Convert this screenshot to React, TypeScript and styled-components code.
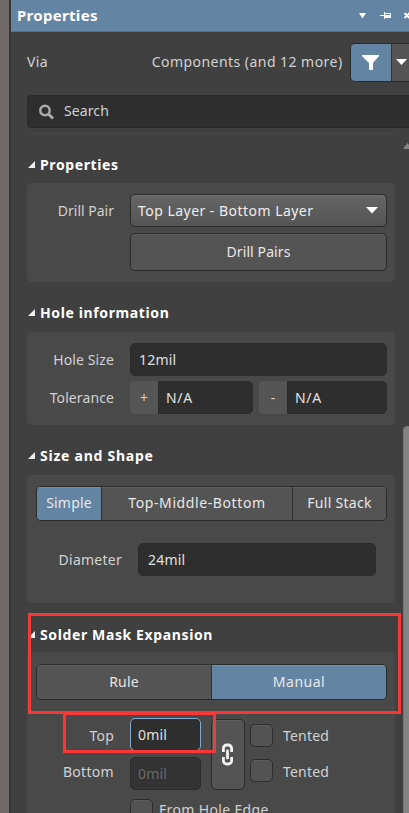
import React from 'react';
import styled, { createGlobalStyle, css } from 'styled-components';

const GlobalStyle = createGlobalStyle`
  * { box-sizing: border-box; }
  html, body { margin: 0; height: 813px; overflow: hidden; }
  body { background: #404040; font: 14px/20px "Noto Sans", "Open Sans", sans-serif; color: #d2d2d2; }
`;

const Window = styled.div`
  position: relative;
  width: 409px;
  height: 813px;
  overflow: hidden;
  background: #404040;
  border-left: 9px solid #6f6a67;
`;
const Panel = styled.main`
  width: 400px;
  height: 813px;
  border-left: 2px solid #373737;
`;
const TitleBar = styled.header`
  display: flex;
  align-items: center;
  height: 32px;
  padding: 0 0 1px 6px;
  background: #6384a3;
  border-bottom: 1px solid #56728d;
  color: #fff;
`;
const TitleText = styled.h1`
  flex: 1;
  margin: 0;
  font: 700 15px/20px "Noto Sans", sans-serif;
  letter-spacing: 0.3px;
`;
const TitleIcons = styled.svg`
  display: block;
  width: 52px;
  height: 31px;
`;
const FilterRow = styled.div`
  display: flex;
  align-items: center;
  height: 40px;
  margin: 10px 0 0 16px;
  width: 390px;
`;
const Label = styled.span<{ $width?: number; $spacing?: number }>`
  display: block;
  width: ${p => (p.$width ? `${p.$width}px` : 'auto')};
  letter-spacing: ${p => p.$spacing ?? 0}px;
  white-space: pre;
`;
const FieldLabel = styled(Label)`
  text-align: right;
  flex: none;
`;
const FilterButtons = styled.div`
  display: flex;
  height: 39px;
  margin-left: 7px;
  border: 1px solid #2a2a2a;
  border-radius: 5px;
  overflow: hidden;
`;
const FilterButton = styled.button<{ $active?: boolean }>`
  width: ${p => (p.$active ? 41 : 24)}px;
  padding: 0;
  border: 0;
  border-right: 1px solid #333;
  background: ${p => (p.$active ? '#6384a3' : '#555')};
  svg { display: block; }
`;
const SearchBox = styled.div`
  display: flex;
  align-items: center;
  width: 390px;
  height: 33px;
  margin: 13px 0 0 16px;
  padding: 0 0 2px 11px;
  gap: 9px;
  border: 1px solid #282828;
  border-radius: 4px;
  background: #2e2e2e;
  svg { margin-top: 2px; }
`;
const Divider = styled.hr`
  width: 366px;
  height: 1px;
  margin: 5px 0 0 18px;
  border: 0;
  background: #474747;
`;
const Heading = styled.h2<{ $height: number; $bottom: number; $spacing?: number }>`
  display: flex;
  align-items: flex-end;
  gap: 5px;
  height: ${p => p.$height}px;
  margin: 0 0 0 17px;
  padding-bottom: ${p => p.$bottom}px;
  color: #fff;
  font: 700 14px/20px "Noto Sans", sans-serif;
  letter-spacing: ${p => p.$spacing ?? 0.62}px;
  svg { margin-bottom: 7px; flex: none; }
`;
const Group = styled.section<{ $height: number; $top?: number }>`
  width: 368px;
  height: ${p => p.$height}px;
  margin-left: 16px;
  padding: ${p => p.$top ?? 11}px 8px 0 9px;
  border-radius: 5px;
  background: #494949;
`;
const Row = styled.div<{ $gap?: number; $indent?: number }>`
  display: flex;
  align-items: center;
  margin-top: ${p => p.$gap ?? 0}px;
  padding-left: ${p => p.$indent ?? 0}px;
`;
const control = css`
  display: flex;
  align-items: center;
  border: 1px solid #2b2b2b;
  border-radius: 5px;
  white-space: pre;
`;
const Field = styled.div<{ $width: number; $state?: 'focus' | 'disabled'; $joined?: boolean; $spacing?: number; $pad?: number }>`
  ${control}
  width: ${p => p.$width}px;
  height: 33px;
  padding-left: ${p => p.$pad ?? 8}px;
  background: ${p => (p.$state === 'disabled' ? '#333' : '#2e2e2e')};
  color: ${p => (p.$state === 'disabled' ? '#696969' : '#e0e0e0')};
  letter-spacing: ${p => p.$spacing ?? 0.2}px;
  ${p => p.$state === 'focus' && css`border-color: #83a9cc;`}
  ${p => p.$joined && css`border-radius: 0 5px 5px 0;`}
`;
const Sign = styled.span<{ $offset?: number }>`
  width: 28px;
  height: 33px;
  margin-left: ${p => p.$offset ?? 0}px;
  border-radius: 4px 0 0 4px;
  background: #555;
  text-align: center;
  line-height: 34px;
`;
const Select = styled.div`
  ${control}
  width: 257px;
  height: 33px;
  padding: 0 8px 0 7px;
  justify-content: space-between;
  background: linear-gradient(#666, #545454);
  box-shadow: inset 0 1px #707070;
  color: #eee;
`;
const Button = styled.button<{ $width: number; $height: number }>`
  ${control}
  flex: none;
  justify-content: center;
  width: ${p => p.$width}px;
  height: ${p => p.$height}px;
  padding: 0;
  background: #545454;
  box-shadow: inset 0 1px #5f5f5f;
  color: #e8e8e8;
  font: inherit;
`;
const Segments = styled.div<{ $height: number }>`
  display: flex;
  width: 351px;
  height: ${p => p.$height}px;
  border: 1px solid #2b2b2b;
  border-radius: 5px;
  overflow: hidden;
`;
const Segment = styled.button<{ $width: number; $active?: boolean; $spacing?: number }>`
  width: ${p => p.$width}px;
  flex: none;
  padding: 0 0 1px;
  border: 0;
  border-right: 1px solid #333;
  background: ${p => (p.$active ? '#6384a3' : '#545454')};
  box-shadow: inset 0 1px ${p => (p.$active ? '#6f90af' : '#5f5f5f')};
  color: #e8e8e8;
  font: inherit;
  letter-spacing: ${p => p.$spacing ?? 0}px;
  &:last-child { border-right: 0; }
`;
const MaskGrid = styled.div`
  display: grid;
  grid-template-columns: 71px 34px 23px auto;
  margin-left: 16px;
  height: 72px;
`;
const MaskFields = styled.div`
  display: flex;
  margin-top: 18px;
`;
const Stack = styled.div<{ $gap: number; $left?: number; $top?: number }>`
  display: flex;
  flex-direction: column;
  gap: ${p => p.$gap}px;
  margin: ${p => p.$top ?? 0}px 0 0 ${p => p.$left ?? 0}px;
`;
const Check = styled.span`
  display: block;
  width: 23px;
  height: 23px;
  border: 1px solid #2d2d2d;
  border-radius: 5px;
  background: #535353;
  box-shadow: inset 0 1px #5c5c5c;
`;
const EdgeLabel = styled(Label)`
  margin: -1px 0 1px 6px;
`;
const ScrollUp = styled.svg`
  position: absolute;
  left: 394px;
  top: 142px;
`;
const ScrollThumb = styled.div`
  position: absolute;
  left: 394px;
  top: 426px;
  width: 10px;
  height: 400px;
  border: 1px solid #747474;
  border-radius: 4px 0 0 0;
  background: #838383;
`;
const Highlight = styled.div<{ $x: number; $y: number; $w: number; $h: number }>`
  position: absolute;
  left: ${p => p.$x}px;
  top: ${p => p.$y}px;
  width: ${p => p.$w}px;
  height: ${p => p.$h}px;
  border: 3px solid #fa3737;
  pointer-events: none;
`;

const Expander = () => (
  <svg width="7" height="7" viewBox="0 0 7 7"><path d="M7 0v7H0z" fill="#eee" /></svg>
);

export default function App() {
  return (
    <Window>
      <GlobalStyle />
      <Panel>
        <TitleBar>
          <TitleText>Properties</TitleText>
          <TitleIcons viewBox="0 0 52 31" fill="#fff">
            <path d="M2 13h7l-3.500 5.500z" />
            <path d="M23 15h4v-3h1v1h6v5h-6v1h-1v-3h-4zM28 14v1h5v-1z" fillRule="evenodd" />
            <path d="M47.500 13l5 5m0-5l-5 5" stroke="#fff" strokeWidth="1.800" />
          </TitleIcons>
        </TitleBar>
        <FilterRow>
          <Label $width={125} $spacing={0.4}>Via</Label>
          <Label $width={192} $spacing={0.46}>Components (and 12 more)</Label>
          <FilterButtons>
            <FilterButton $active>
              <svg width="40" height="37" viewBox="0 0 40 37"><path d="M11 11h17v1l-6 7v7h-4v-7l-7-7z" fill="#fff" /></svg>
            </FilterButton>
            <FilterButton>
              <svg width="24" height="37" viewBox="0 0 24 37"><path d="M4 15h11l-5.500 6z" fill="#fff" /></svg>
            </FilterButton>
          </FilterButtons>
        </FilterRow>
        <SearchBox>
          <svg width="16" height="16" viewBox="0 0 16 16" fill="none" stroke="#aaa">
            <circle cx="6" cy="6.500" r="4.700" strokeWidth="2.500" />
            <path d="M9.500 10l4.500 4.500" strokeWidth="3" />
          </svg>
          <Label $spacing={0.1}>Search</Label>
        </SearchBox>
        <Divider />

        <Heading $height={49} $bottom={8}><Expander />Properties</Heading>
        <Group $height={99}>
          <Row>
            <FieldLabel $width={78}>Drill Pair</FieldLabel>
            <Stack $left={16} $gap={5}>
              <Select>
                <Label $spacing={0.47}>Top Layer - Bottom Layer</Label>
                <svg width="12" height="7" viewBox="0 0 12 7"><path d="M0 0h12L6 6.500z" fill="#fff" /></svg>
              </Select>
            </Stack>
          </Row>
          <Row $gap={6} $indent={94}>
            <Button $width={257} $height={38}><Label $spacing={0.1}>Drill Pairs</Label></Button>
          </Row>
        </Group>

        <Heading $height={50} $bottom={9}><Expander />Hole information</Heading>
        <Group $height={93}>
          <Row>
            <FieldLabel $width={78} $spacing={0.1}>Hole Size</FieldLabel>
            <Stack $left={16} $gap={0}><Field $width={257}>12mil</Field></Stack>
          </Row>
          <Row $gap={5}>
            <FieldLabel $width={78} $spacing={0.1}>Tolerance</FieldLabel>
            <Sign $offset={16}>+</Sign>
            <Field $width={95} $joined $pad={7} $spacing={0.7}>N/A</Field>
            <Sign $offset={6}>-</Sign>
            <Field $width={100} $joined $pad={7} $spacing={0.7}>N/A</Field>
          </Row>
        </Group>

        <Heading $height={50} $bottom={9} $spacing={0.75}><Expander />Size and Shape</Heading>
        <Group $height={128}>
          <Segments $height={35}>
            <Segment $width={65} $active $spacing={0.2}>Simple</Segment>
            <Segment $width={191} $spacing={0.6}> Top-Middle-Bottom</Segment>
            <Segment $width={93} $spacing={0.3}>Full Stack</Segment>
          </Segments>
          <Row $gap={22}>
            <FieldLabel $width={86} $spacing={0.25}>Diameter</FieldLabel>
            <Stack $left={16} $gap={0}><Field $width={238} $pad={9}>24mil</Field></Stack>
          </Row>
        </Group>

        <Heading $height={49} $bottom={7}><Expander />Solder Mask Expansion</Heading>
        <Group $height={175} $top={12}>
          <Segments $height={36}>
            <Segment $width={175} $spacing={0.2}>Rule</Segment>
            <Segment $width={174} $active $spacing={0.5}>Manual</Segment>
          </Segments>
          <MaskFields>
            <Stack $gap={16} $top={8}>
              <FieldLabel $width={78} $spacing={0.2}>Top</FieldLabel>
              <FieldLabel $width={78} $spacing={0.3}>Bottom</FieldLabel>
            </Stack>
            <MaskGrid>
              <Stack $gap={6}>
                <Field $width={71} $state="focus" $pad={7}>0mil</Field>
                <Field $width={71} $state="disabled" $pad={7}>0mil</Field>
              </Stack>
              <Stack $gap={0} $left={10} $top={1}>
                <Button $width={34} $height={71}>
                  <svg width="14" height="24" viewBox="0 0 14 24" fill="none" stroke="#f2f2f2" strokeWidth="2.800">
                    <path d="M2.400 9V5.300A3.300 3.300 0 0 1 5.700 2h1.600a3.300 3.300 0 0 1 3.300 3.300V9M2.400 14v3.700A3.300 3.300 0 0 0 5.700 21h1.600a3.300 3.300 0 0 0 3.300-3.300V14" />
                    <path d="M6.500 8v7" strokeLinecap="round" />
                  </svg>
                </Button>
              </Stack>
              <Stack $gap={12} $left={15} $top={6}><Check /><Check /></Stack>
              <Stack $gap={16} $left={25} $top={8}><Label $spacing={0.2}>Tented</Label><Label $spacing={0.2}>Tented</Label></Stack>
            </MaskGrid>
          </MaskFields>
          <Row $gap={9} $indent={94}>
            <Check /><EdgeLabel $spacing={0.35}>From Hole Edge</EdgeLabel>
          </Row>
        </Group>
      </Panel>
      <ScrollUp width="8" height="7" viewBox="0 0 8 7"><path d="M0 7l4.500-6L9 7z" fill="#838383" /></ScrollUp>
      <ScrollThumb />
      <Highlight $x={54} $y={712} $w={153} $h={41} />
      <Highlight $x={19} $y={613} $w={373} $h={101} />
    </Window>
  );
}
